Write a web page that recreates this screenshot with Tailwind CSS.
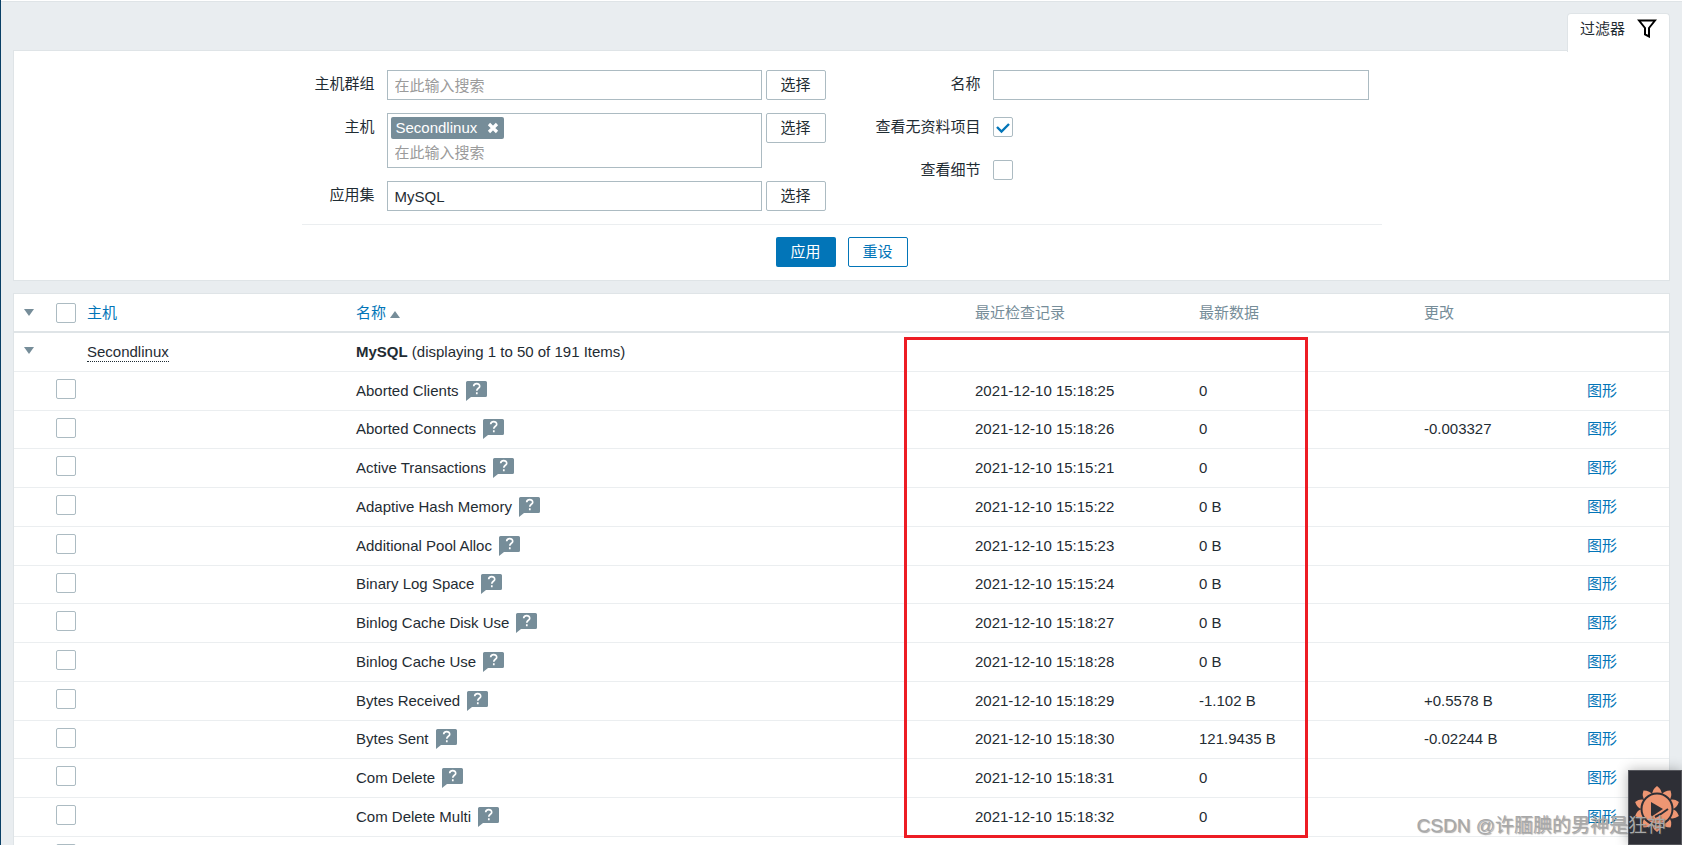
<!DOCTYPE html>
<html lang="zh-CN">
<head>
<meta charset="utf-8">
<title>最新数据</title>
<script src="https://cdn.jsdelivr.net/npm/@tailwindcss/browser@4"></script>
</head>
<body class="relative h-screen overflow-hidden border-l border-[#0a4066] bg-[#e9edf0] font-['Liberation_Sans','Noto_Sans_CJK_SC',sans-serif] text-[15px] leading-5 text-[#1f2c33]">
<svg class="hidden">
  <symbol id="check" viewBox="0 0 20 20"><path d="M4 10L8.500 14.500L16 7" fill="none" stroke="#0275b8" stroke-width="2.400"/></symbol>
  <symbol id="hint" viewBox="0 0 21 20"><path d="M1.500 0H19.500Q21 0 21 1.500V14.500Q21 16 19.500 16H5L0 20V1.500Q0 0 1.500 0Z" fill="#768d99"/><path d="M7.700 5.200C7.700 1.800 13.700 1.700 13.700 5.200C13.700 7.300 10.800 7.300 10.800 9.800M10.800 11.300V13.200" fill="none" stroke="#fff" stroke-width="1.700"/></symbol>
</svg>
<header class="h-[50px] border-t border-white">
  <div class="flex h-[51px] justify-end border-t border-[#dfe4e7] pt-[11px] pr-3">
    <button class="relative z-10 flex h-[39px] w-[103px] items-start justify-between rounded-t-sm border border-b-0 border-[#dfe4e7] bg-white pt-[5px] pr-3 pl-3"><span>过滤器</span>
      <svg class="h-[19px] w-5" viewBox="0 0 20 19"><path d="M2 1.500H18L12 9V17.500L8 15.500V9Z" fill="none" stroke="#000" stroke-width="2"/></svg>
    </button>
  </div>
</header>
<main class="px-3">
  <form class="border border-[#dfe4e7] bg-white pt-[19px] pb-[13px]" onsubmit="return false">
    <div class="mx-auto w-[1080px]">
      <div class="flex h-[155px] border-b border-[#ebeef0]">
        <div class="grid w-[541px] grid-cols-[73px_383px_60px] content-start gap-x-1 gap-y-[13px]">
          <label for="groups" class="pt-1 text-right">主机群组</label>
          <input id="groups" placeholder="在此输入搜索" class="ml-2 h-[30px] border border-[#acbbc2] px-[7px] placeholder:text-[#9b9b9b]">
          <button class="h-[30px] rounded-xs border border-[#acbbc2]">选择</button>
          <label for="hosts" class="pt-1 text-right">主机</label>
          <div class="ml-2 h-[55px] border border-[#acbbc2] p-[3px]">
            <span class="flex h-[22px] w-[113px] items-center justify-between rounded-xs bg-[#768d99] px-[5px] text-white">Secondlinux
              <button aria-label="移除" class="h-3 w-3"><svg viewBox="0 0 12 12"><path d="M2 2L10 10M10 2L2 10" stroke="#fff" stroke-width="3.200"/></svg></button></span>
            <input id="hosts" placeholder="在此输入搜索" class="block h-[26px] w-full px-1 placeholder:text-[#9b9b9b]">
          </div>
          <button class="h-[30px] rounded-xs border border-[#acbbc2]">选择</button>
          <label for="app" class="pt-1 text-right">应用集</label>
          <input id="app" value="MySQL" class="ml-2 h-[30px] border border-[#acbbc2] px-[7px]">
          <button class="h-[30px] rounded-xs border border-[#acbbc2]">选择</button>
        </div>
        <div class="grid w-[539px] auto-rows-[30px] grid-cols-[138px_376px] content-start gap-x-3 gap-y-[13px]">
          <label for="name" class="pt-1 text-right">名称</label>
          <input id="name" class="h-[30px] border border-[#acbbc2] px-[7px]">
          <label for="nodata" class="pt-1 text-right">查看无资料项目</label>
          <span class="relative mt-1 h-5 w-5"><input id="nodata" type="checkbox" checked class="block h-5 w-5 appearance-none rounded-xs border border-[#acbbc2] bg-white"><svg class="pointer-events-none absolute inset-0 h-5 w-5"><use href="#check"/></svg></span>
          <label for="details" class="pt-1 text-right">查看细节</label>
          <input id="details" type="checkbox" class="mt-1 h-5 w-5 appearance-none rounded-xs border border-[#acbbc2] bg-white">
        </div>
      </div>
      <div class="flex justify-center gap-3 pt-3">
        <button class="h-[30px] w-[60px] rounded-xs bg-[#0275b8] text-white">应用</button>
        <button class="h-[30px] w-[60px] rounded-xs border border-[#0275b8] text-[#0275b8]">重设</button>
      </div>
    </div>
  </form>
  <table class="mt-3 w-full table-fixed border-separate border-spacing-0 border border-b-0 border-[#dfe4e7] bg-white text-left">
    <colgroup><col class="w-[37px]"><col class="w-[36px]"><col class="w-[269px]"><col><col class="w-[224px]"><col class="w-[225px]"><col class="w-[163px]"><col class="w-[82px]"></colgroup>
    <thead>
      <tr class="h-[39px] text-[#768d99] *:border-b-2 *:border-[#dfe4e7] *:font-normal">
        <th class="pl-[10px]"><button aria-label="全部折叠" class="block"><svg class="h-[7px] w-[10px]" viewBox="0 0 10 7"><path d="M0 0H10L5 7Z" fill="#768d99"/></svg></button></th>
        <th class="pl-[5px]"><input type="checkbox" aria-label="全选" class="block h-5 w-5 appearance-none rounded-xs border border-[#acbbc2] bg-white"></th>
        <th><a href="#" class="text-[#0275b8]">主机</a></th>
        <th><a href="#" class="flex items-center gap-1 text-[#0275b8]">名称<svg class="mt-1 h-[7px] w-[10px]" viewBox="0 0 10 7"><path d="M0 7H10L5 0Z" fill="#768d99"/></svg></a></th>
        <th>最近检查记录</th><th>最新数据</th><th>更改</th><th></th>
      </tr>
    </thead>
    <tbody id="rows">
      <tr class="h-[39px] *:border-b *:border-[#ebeef0]">
        <td class="pb-1 pl-[10px]"><button aria-label="折叠" class="block"><svg class="h-[7px] w-[10px]" viewBox="0 0 10 7"><path d="M0 0H10L5 7Z" fill="#768d99"/></svg></button></td>
        <td></td>
        <td><a href="#" class="inline-block border-b border-dotted border-[#1f2c33] leading-[18px]">Secondlinux</a></td>
        <td><b>MySQL</b> (displaying 1 to 50 of 191 Items)</td><td></td><td></td><td></td><td></td>
      </tr>
    </tbody>
  </table>
</main>
<div class="pointer-events-none absolute top-[337px] left-[903px] h-[501px] w-[404px] border-3 border-[#ed1c24]"></div>
<button aria-label="录制工具" class="absolute right-0 bottom-0 h-[75px] w-[54px] border border-[#55565c] bg-[#2e2f36] shadow-[0_0_12px_rgba(0,0,0,0.3)]">
  <svg class="h-[73px] w-[53px]" viewBox="0 0 53 73">
    <g id="petals" fill="#ee9673"></g>
    <circle cx="28" cy="38" r="15.500" fill="#ee9673" stroke="#2e2f36" stroke-width="2"/>
    <path d="M22 31L34 38L22 46Z" fill="#2e2f36"/><path d="M26 46L32 43L39 38" fill="none" stroke="#2e2f36" stroke-width="2"/>
  </svg>
</button>
<div class="pointer-events-none absolute right-4 bottom-[7px] text-[19px] leading-6 whitespace-nowrap text-[#a8a8a8] [text-shadow:1px_1px_1px_rgba(80,80,80,0.5)]">CSDN @许腼腆的男神是狂神</div>
<template id="row">
  <tr class="h-[39px] *:border-b *:border-[#ebeef0]">
    <td></td>
    <td class="pl-[5px]"><input type="checkbox" class="mb-1 block h-5 w-5 appearance-none rounded-xs border border-[#acbbc2] bg-white"></td>
    <td></td>
    <td class="pb-px"><span class="flex items-center gap-[7px]"><span></span><svg class="h-5 w-[21px]"><use href="#hint"/></svg></span></td>
    <td class="pb-px"></td><td class="pb-px"></td><td class="pb-px"></td>
    <td class="pb-px"><a href="#" class="text-[#0275b8]">图形</a></td>
  </tr>
</template>
<script>
const items = [
  ['Aborted Clients','18:25','0',''],['Aborted Connects','18:26','0','-0.003327'],['Active Transactions','15:21','0',''],
  ['Adaptive Hash Memory','15:22','0 B',''],['Additional Pool Alloc','15:23','0 B',''],['Binary Log Space','15:24','0 B',''],
  ['Binlog Cache Disk Use','18:27','0 B',''],['Binlog Cache Use','18:28','0 B',''],['Bytes Received','18:29','-1.102 B','+0.5578 B'],
  ['Bytes Sent','18:30','121.9435 B','-0.02244 B'],['Com Delete','18:31','0',''],['Com Delete Multi','18:32','0',''],null
];
items.forEach((item, i) => {
  const tr = document.getElementById('row').content.firstElementChild.cloneNode(true);
  if (i % 4 === 1) tr.classList.replace('h-[39px]', 'h-[38px]');
  if (item) {
    const [name, time, value, change] = item;
    tr.querySelector('input').setAttribute('aria-label', name);
    tr.cells[3].querySelector('span span').textContent = name;
    tr.cells[4].textContent = '2021-12-10 15:' + time;
    tr.cells[5].textContent = value;
    tr.cells[6].textContent = change;
  } else {
    tr.cells[3].textContent = '';
    tr.cells[7].textContent = '';
  }
  document.getElementById('rows').append(tr);
});
document.getElementById('petals').innerHTML = Array.from({length: 10}, (_, i) =>
  `<path transform="rotate(${i * 36} 28 38)" d="M23.500 24Q22.500 19 28 15Q33.500 19 32.500 24Z"/>`).join('');
</script>
</body>
</html>
